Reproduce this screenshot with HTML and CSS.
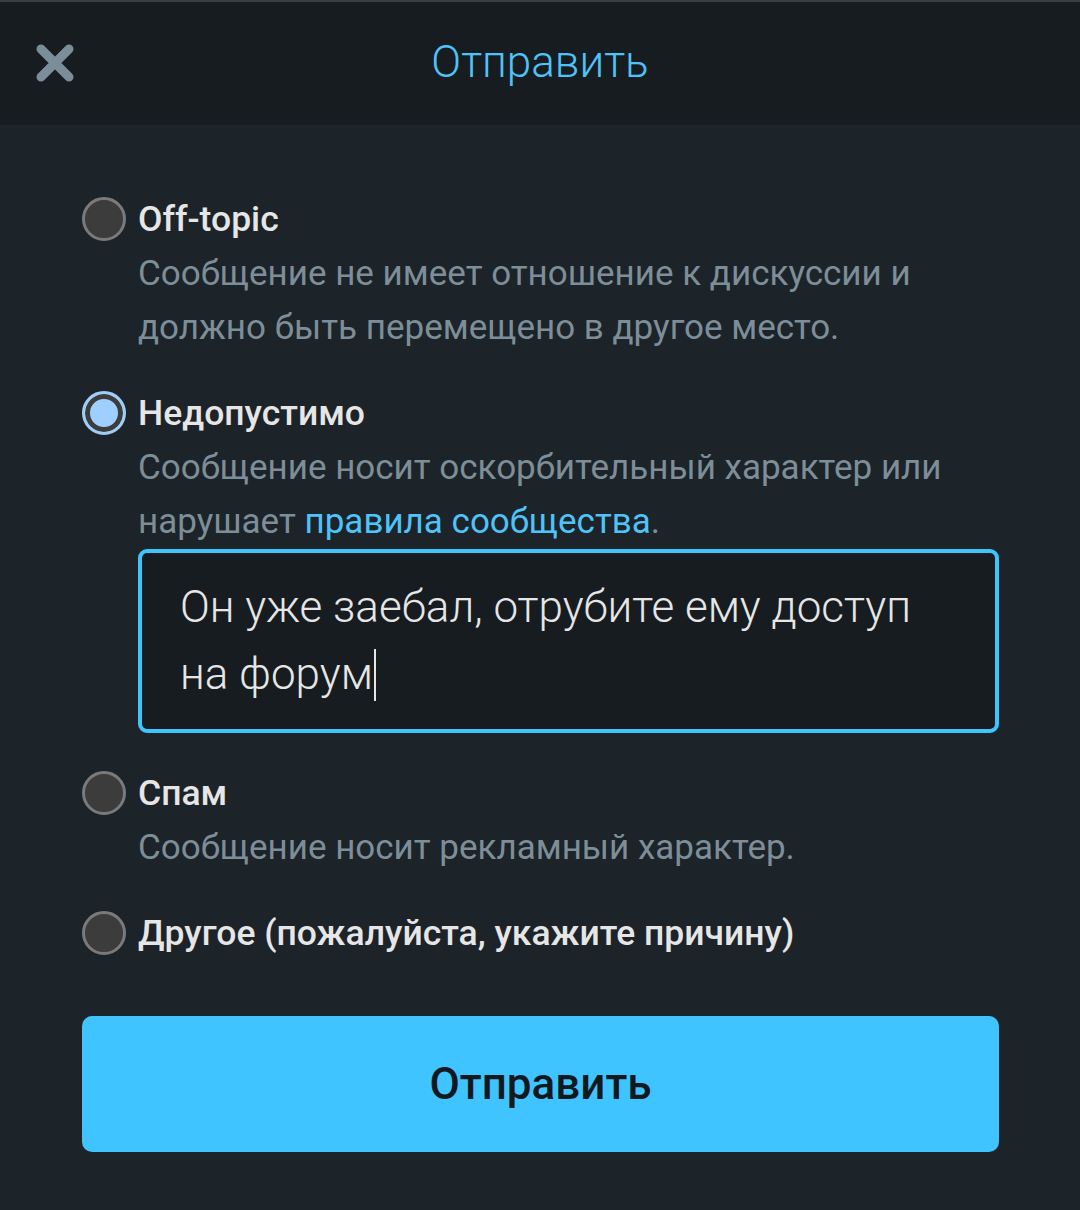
FILE: index.html
```html
<!DOCTYPE html>
<html lang="ru">
<head>
  <meta charset="UTF-8">
  <meta name="viewport" content="width=device-width, initial-scale=1">
  <title>Отправить</title>
  <link rel="stylesheet" href="styles.css">
</head>
<body>

  <header class="topbar">
    <button class="close" aria-label="Закрыть">
      <svg width="40" height="40" viewBox="0 0 40 40">
        <path d="M6 6 L34 34 M34 6 L6 34" stroke="#7a8d99" stroke-width="9" stroke-linecap="round"/>
      </svg>
    </button>
    <h1 class="title">Отправить</h1>
  </header>

  <main class="content">
    <form class="reasons">
      <label class="reason">
        <span class="radio"></span>
        <span class="body">
          <span class="name">Off-topic</span>
          <span class="desc">Сообщение не имеет отношение к дискуссии и должно быть перемещено в другое место.</span>
        </span>
      </label>

      <label class="reason">
        <span class="radio checked"></span>
        <span class="body">
          <span class="name">Недопустимо</span>
          <span class="desc">Сообщение носит оскорбительный характер или нарушает <a href="#" class="link">правила сообщества</a>.</span>
          <span class="note">Он уже заебал, отрубите ему доступ на форум<span class="caret"></span></span>
        </span>
      </label>

      <label class="reason">
        <span class="radio"></span>
        <span class="body">
          <span class="name">Спам</span>
          <span class="desc">Сообщение носит рекламный характер.</span>
        </span>
      </label>

      <label class="reason">
        <span class="radio"></span>
        <span class="body">
          <span class="name">Другое (пожалуйста, укажите причину)</span>
        </span>
      </label>

      <button type="button" class="submit">Отправить</button>
    </form>
  </main>

</body>
</html>
```

FILE: styles.css
```css
body {
  margin: 0;
  font-family: Roboto, "Noto Sans", sans-serif;
  background-color: #1c2329;
  border-top: 2px solid #3b3d3e;
}

.topbar {
  height: 123px;
  background-color: #161c20;
  display: flex;
  align-items: center;
  position: relative;
}

.close {
  background: none;
  border: none;
  padding: 0;
  margin-left: 35px;
  margin-top: -2px;
  width: 40px;
  height: 40px;
  cursor: pointer;
}

.title {
  position: absolute;
  left: 0;
  right: 0;
  top: 32px;
  margin: 0;
  text-align: center;
  font-weight: 300;
  font-size: 44px;
  line-height: 56px;
  color: #4fc3f7;
  pointer-events: none;
}

.content {
  padding: 70px 81px 56px 82px;
}

.reasons {
  display: flex;
  flex-direction: column;
}

.reason {
  display: flex;
  gap: 12px;
  margin-bottom: 34px;
}

.radio {
  flex: none;
  width: 38px;
  height: 38px;
  margin-top: 2px;
  border-radius: 50%;
  border: 3px solid #7a7a7a;
  background-color: #3c3c3c;
}

.radio.checked {
  border-color: #9fcdf5;
  background-color: #9fcfff;
  box-shadow: inset 0 0 0 5px #3c3c3c;
}

.body {
  display: flex;
  flex-direction: column;
  flex: 1;
}

.name {
  font-weight: 500;
  font-size: 35.5px;
  line-height: 48px;
  color: #e6e6e6;
}

.desc {
  margin-top: 4px;
  font-size: 35px;
  line-height: 54px;
  color: #7d8e98;
}

.link {
  color: #4fc3f7;
  text-decoration: none;
}

.note {
  margin-bottom: 2px;
  padding: 21px 36px 21px 38px;
  border: 4px solid #3ec5fb;
  border-radius: 9px;
  background-color: #161c20;
  font-weight: 300;
  font-size: 44px;
  line-height: 67px;
  color: #e6e6e6;
}

.caret {
  display: inline-block;
  width: 2px;
  height: 52px;
  margin-left: 1px;
  vertical-align: -12px;
  background-color: #e6e6e6;
}

.submit {
  margin-top: 25px;
  height: 136px;
  border: none;
  border-radius: 10px;
  background-color: #40c4ff;
  color: #12191e;
  font-family: Roboto, "Noto Sans", sans-serif;
  font-weight: 500;
  font-size: 44px;
  cursor: pointer;
}
```
